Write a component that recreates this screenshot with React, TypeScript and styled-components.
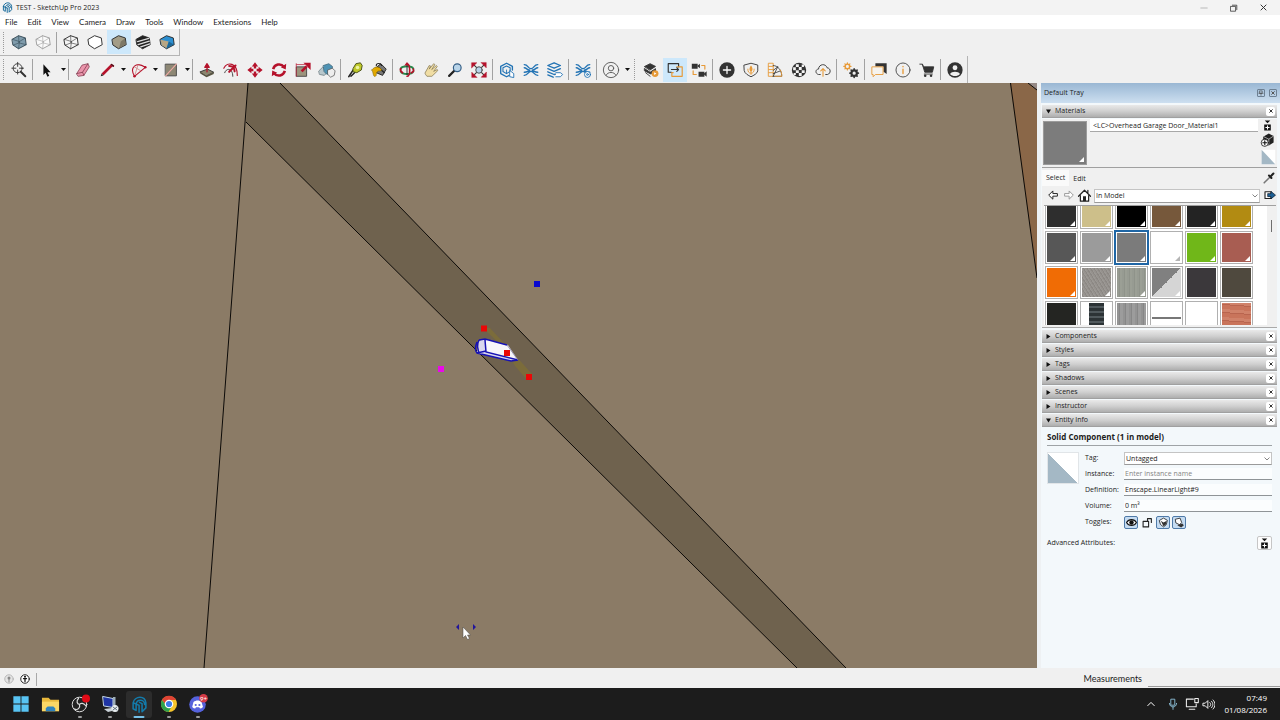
import React from 'react';
import styled, { createGlobalStyle, css } from 'styled-components';

const GlobalStyle = createGlobalStyle`
  *, *::before, *::after { box-sizing: border-box; }
  body { margin: 0; background: #f0f0f0; }
  body, button, input, select { font-family: Lato, "Open Sans", sans-serif; font-size: 8px; line-height: 12px; color: #1c1c1c; }
  button { border: 0; padding: 0; background: none; display: flex; align-items: center; justify-content: center; }
  svg { display: block; }
`;

const Window = styled.div`
  min-height: 100vh;
  display: flex;
  flex-direction: column;
`;

/* ---------- title and menu ---------- */

const TitleBar = styled.header`
  display: flex;
  align-items: center;
  gap: 3px;
  height: 15px;
  padding: 0 3px 0 2px;
  background: #f3f3f3;
`;
const Title = styled.h1`
  flex: 1;
  margin: 0;
  font-family: "Open Sans", sans-serif;
  font-size: 7px;
  font-weight: 400;
`;
const WindowButton = styled.button`
  width: 27px;
  height: 15px;
`;
const MenuBar = styled.nav`
  display: flex;
  height: 14px;
  background: #fff;
`;
const MenuItem = styled.button`
  padding: 0 5px;
`;

/* ---------- toolbars ---------- */

const Toolbar = styled.div<{ $framed?: boolean }>`
  display: flex;
  align-items: center;
  align-self: flex-start;
  height: 27px;
  border-right: 1px solid #b4b4b4;
  ${(p) => p.$framed && css`border-bottom: 1px solid #b4b4b4;`}
`;
const Grip = styled.span<{ $w: number }>`
  width: ${(p) => p.$w}px;
  height: 21px;
  padding-left: 3px;
  &::before {
    content: '';
    display: block;
    height: 100%;
    border-left: 1px dotted #9a9a9a;
  }
`;
const Separator = styled.span`
  width: 4px;
  height: 21px;
  padding-left: 1px;
  &::before {
    content: '';
    display: block;
    height: 100%;
    border-left: 1px solid #a2a2a2;
  }
`;
const ToolButton = styled.button<{ $active?: boolean }>`
  width: 24px;
  height: 24px;
  background: ${(p) => (p.$active ? '#cde8fb' : 'transparent')};
`;
const DropButton = styled.button`
  width: 8px;
  height: 24px;
`;

/* ---------- workspace ---------- */

const Workspace = styled.main`
  flex: 1;
  display: flex;
  align-items: stretch;
`;
const Viewport = styled.section`
  flex: 1;
  min-width: 0;
  display: flex;
  background: #8b7b66;
  svg { width: 100%; height: 100%; }
`;
const Tray = styled.aside`
  flex: 0 0 243px;
  display: flex;
  flex-direction: column;
  border-left: 4px solid #eef1f3;
  background: #f3f8fb;
  &, button, input, select { font-family: "Open Sans", sans-serif; font-size: 7px; }
`;
const TrayTitle = styled.header`
  display: flex;
  align-items: center;
  gap: 4px;
  height: 20px;
  padding: 0 3px;
  background: linear-gradient(#9ab7d3, #b3cbe2 50%, #cddff0);
`;
const Grow = styled.span`
  flex: 1;
`;
const SmallButton = styled.button`
  width: 8px;
  height: 8px;
  border: 1px solid #6d8093;
  border-radius: 1px;
`;
const TrayBody = styled.div`
  display: flex;
  flex-direction: column;
  gap: 1px;
  padding: 2px 3px 0 1px;
`;
const PanelHeader = styled.header`
  display: flex;
  align-items: center;
  height: 13px;
  padding: 0 2px 0 4px;
  border-bottom: 1px solid #a0a0a0;
  background: linear-gradient(#e9e9e9, #d0d0d0 50%, #aeaeae);
`;
const PanelToggle = styled.button`
  gap: 4px;
`;
const CloseButton = styled.button`
  width: 9px;
  height: 9px;
  border-radius: 2px;
  background: #fff;
`;
const MaterialsPanel = styled.div`
  padding-bottom: 2px;
  background: #f0f0f0;
  border-bottom: 1px solid #a9a9a9;
`;
const PreviewRow = styled.div`
  display: flex;
  height: 49px;
  border-bottom: 1px solid #a0a0a0;
`;
const Preview = styled.div`
  position: relative;
  width: 44px;
  height: 44px;
  margin: 2px 3px 0 1px;
  border: 1px solid #9b9b9b;
  background: #7c7c7c;
`;
const FoldCorner = styled.span<{ $outline?: boolean }>`
  position: absolute;
  right: 2px;
  bottom: 2px;
  border-left: 5px solid transparent;
  border-bottom: 5px solid ${(p) => (p.$outline ? '#b5b5b5' : '#fff')};
`;
const MaterialName = styled.input`
  flex: 1;
  min-width: 0;
  height: 13px;
  padding: 0 3px;
  border: 0;
  border-bottom: 1px solid #a8a8a8;
  background: #fff;
`;
const SideIcons = styled.div`
  display: flex;
  flex-direction: column;
  align-items: center;
  gap: 1px;
  width: 19px;
  padding-top: 1px;
`;
const TabRow = styled.div`
  display: flex;
  align-items: flex-end;
  height: 18px;
`;
const Tab = styled.button<{ $active?: boolean }>`
  height: ${(p) => (p.$active ? 16 : 14)}px;
  padding: 0 4px;
  background: ${(p) => (p.$active ? '#fafafa' : 'transparent')};
`;
const NavRow = styled.div`
  display: flex;
  align-items: center;
  gap: 2px;
  height: 19px;
  padding-left: 5px;
`;
const SelectWrap = styled.span`
  position: relative;
  flex: 1;
  display: flex;
  svg { position: absolute; right: 2px; top: 5px; pointer-events: none; }
`;
const Select = styled.select<{ $h: number }>`
  appearance: none;
  flex: 1;
  height: ${(p) => p.$h}px;
  padding: 0 1px;
  border: 1px solid #c4c4c4;
  border-bottom-color: #9a9a9a;
  border-radius: 0;
  background: #fff;
`;
const SwatchArea = styled.div`
  display: flex;
  margin: 0 1px 0 2px;
  border-top: 1px solid #a0a0a0;
  background: #fff;
`;
const SwatchGrid = styled.div`
  flex: 1;
  display: grid;
  grid-template-columns: repeat(6, 1fr);
  grid-template-rows: 23px 33px 33px 24px;
  gap: 2px;
  padding-left: 1px;
`;
const Swatch = styled.button<{ $fill: string; $selected?: boolean; $cut?: 'top' | 'bottom' }>`
  position: relative;
  border: 1px solid ${(p) => (p.$selected ? '#1f66a5' : '#b0b0b0')};
  padding: 1px;
  background: ${(p) => p.$fill} content-box, #fff;
  ${(p) => p.$selected && css`box-shadow: 0 0 0 1px #1f66a5;`}
  ${(p) => p.$cut === 'top' && css`border-top: 0; padding-top: 0;`}
  ${(p) => p.$cut === 'bottom' && css`border-bottom: 0; padding-bottom: 0;`}
`;
const ScrollGutter = styled.div`
  display: flex;
  justify-content: center;
  width: 9px;
  margin-left: 14px;
  padding-top: 14px;
  background: #f0f0f0;
`;
const ScrollThumb = styled.span`
  width: 1px;
  height: 12px;
  background: #6e6e6e;
`;
const SectionList = styled.div`
  display: flex;
  flex-direction: column;
  gap: 1px;
  padding-top: 1px;
`;

/* ---------- entity info ---------- */

const EntityPanel = styled.div`
  padding: 3px 5px 0 5px;
`;
const EntityTitle = styled.h2`
  margin: 0 0 4px;
  padding-bottom: 2px;
  border-bottom: 1px solid #9ea3a6;
  font-size: 8px;
  font-weight: 700;
  line-height: 12px;
`;
const EntityBody = styled.div`
  display: flex;
  gap: 6px;
`;
const EntityThumb = styled.div`
  width: 32px;
  height: 32px;
  margin-top: 2px;
  border: 1px solid #e1e5e8;
  background: linear-gradient(45deg, #a4b8c5 50%, #fff 50%);
`;
const Fields = styled.div`
  flex: 1;
  display: grid;
  grid-template-columns: 39px 1fr;
  grid-auto-rows: 16px;
  align-items: center;
`;
const FieldInput = styled.input`
  width: 100%;
  min-width: 0;
  height: 12px;
  padding: 0 1px;
  border: 0;
  border-bottom: 1px solid #8f9497;
  background: #fbfdfe;
  &::placeholder { color: #858585; opacity: 1; }
`;
const Toggles = styled.div`
  display: flex;
  gap: 2px;
`;
const ToggleButton = styled.button<{ $on?: boolean }>`
  width: 14px;
  height: 13px;
  border: 1px solid ${(p) => (p.$on ? '#4f7aa8' : 'transparent')};
  border-radius: 2px;
  background: ${(p) => (p.$on ? '#c5dcf2' : 'transparent')};
`;
const AdvancedRow = styled.div`
  display: flex;
  align-items: center;
  justify-content: space-between;
  height: 16px;
  margin-top: 5px;
`;
const AdvancedButton = styled.button`
  width: 15px;
  height: 14px;
  border: 1px solid #c6c6c6;
  border-radius: 2px;
  background: #fdfdfd;
`;

/* ---------- status bar and taskbar ---------- */

const StatusBar = styled.footer`
  display: flex;
  align-items: center;
  gap: 6px;
  height: 20px;
  padding: 2px 0 0 4px;
  background: #f0f0f0;
`;
const StatusRule = styled.span`
  width: 1px;
  height: 13px;
  background: #a8a8a8;
`;
const MeasureLabel = styled.label`
  padding-left: 2px;
  font-size: 9px;
`;
const MeasureInput = styled.input`
  width: 132px;
  height: 16px;
  border: 0;
  border-bottom: 1px solid #9a9a9a;
  background: transparent;
`;
const Taskbar = styled.footer`
  display: flex;
  align-items: center;
  justify-content: space-between;
  height: 32px;
  padding: 0 13px 0 8px;
  background: #1c1c1c;
`;
const Apps = styled.div`
  display: flex;
  justify-content: space-between;
  width: 203px;
`;
const AppButton = styled.button<{ $active?: boolean }>`
  position: relative;
  width: 26px;
  height: 27px;
  border-radius: 3px;
  background: ${(p) => (p.$active ? '#2c2c2c' : 'transparent')};
`;
const RunMark = styled.span<{ $active?: boolean }>`
  position: absolute;
  left: 50%;
  bottom: 0;
  width: ${(p) => (p.$active ? 11 : 4)}px;
  height: 2px;
  border-radius: 1px;
  transform: translateX(-50%);
  background: ${(p) => (p.$active ? '#76c2ea' : '#9c9c9c')};
`;
const SystemTray = styled.div`
  display: flex;
  align-items: center;
  gap: 3px;
`;
const TrayButton = styled.button`
  width: 19px;
  height: 27px;
`;
const Clock = styled.time`
  width: 49px;
  color: #fff;
  font-family: "Open Sans", sans-serif;
  text-align: right;
`;

/* ---------- drawings ---------- */

type Draw = React.ReactNode;
const Svg = ({ s = 20, children }: { s?: number; children: Draw }) => (
  <svg width={s} height={s} viewBox="0 0 20 20" fill="none" strokeLinejoin="round" strokeLinecap="round" aria-hidden="true">
    {children}
  </svg>
);

const hull = 'M2.500 7 9.500 3 17 5.500 18 13 9.500 17.500 3.500 13.500Z';
const Cube = ({ fill, line = '#222', inner = true }: { fill: string; line?: string; inner?: boolean }) => (
  <>
    <path d={hull} fill={fill} stroke={line} />
    {inner && <path d="M2.500 7 10.500 9.500 17 5.500M10.500 9.500 9.500 17.500M9.500 3 10 11 3.500 13.500M10 11 18 13" stroke={line} strokeWidth=".6" />}
  </>
);

const R = '#b5122b';
const B = '#2273b4';
const O = '#e79a38';
const K = '#333';

const styleIcons: Record<string, Draw> = {
  'X-Ray': <Cube fill="#7f9bab" line="#2f4450" />,
  'Back Edges': <Cube fill="#fafafa" line="#999" />,
  Wireframe: <Cube fill="#f5f5f5" line="#222" />,
  'Hidden Line': <Cube fill="#fff" inner={false} />,
  Shaded: <><Cube fill="#a39d88" inner={false} /><path d="M12 9.500 16.500 6 17.500 12.500 10 17Z" fill="#7d7866" /></>,
  Textures: <><Cube fill="#222" inner={false} /><path d="M4 9.500 16.500 6M4.500 13 17 9M7.500 15.500 17.500 12" stroke="#ddd" strokeWidth="1.400" /></>,
  Monochrome: <><Cube fill="#2d8fd0" inner={false} /><path d="M3 7.500 12 9.500 9.500 17 4 13.500Z" fill="#b8a684" /><path d="M12 9.500 17.500 12.800 9.500 17Z" fill="#1c6798" /></>,
};

const swirl = (
  <path
    d="M2.500 4C7 4 6.500 8.500 10 8.500S13 4 17.500 4M2.500 16C7 16 6.500 11.500 10 11.500S13 16 17.500 16M2.500 7.500C5 7.500 5.500 10 8 10S5 12.500 2.500 12.500M17.500 7.500C15 7.500 14.500 10 12 10S15 12.500 17.500 12.500"
    stroke={B}
    strokeWidth="1.500"
  />
);

const icons: Record<string, Draw> = {
  Search: <><circle cx="8.500" cy="8" r="5" stroke={K} /><path d="M8.500 1.500V6M8.500 10v4.500M2 8h4.500M10.500 8H15" stroke={K} /><path d="m12 12 5 5" stroke={K} strokeWidth="2.200" /></>,
  Select: <path d="M6 3.500V15.500L8.500 13 10.500 17.500 12.500 16.500 10.500 12.500H14Z" fill="#111" />,
  Eraser: <><path d="M3 14 9 4.500 15.500 3 17 6.500 11 16 5 17Z" fill="#ea94ab" stroke="#7c3548" strokeWidth=".8" /><path d="M3 14 9.500 12.500 11 16M9.500 12.500 15.500 3" stroke="#7c3548" strokeWidth=".8" /></>,
  Line: <><path d="M5 15 15 5" stroke={R} strokeWidth="3" strokeLinecap="butt" /><path d="m3 17 1-3 2 2Z" fill="#222" /><path d="m15 4 2 1.500" stroke="#5a0713" strokeWidth="2" /></>,
  Arc: <><path d="M5 17C-1 7 7 0 17 7L5 17" stroke={R} strokeWidth="1.200" /><path d="M5 6.500l7 4.500M5 17 9 4" stroke="#c77" strokeWidth=".8" /><circle cx="5" cy="17" r="1.400" fill={R} /><circle cx="17" cy="7" r="1.400" fill={R} /></>,
  Rectangle: <><path d="M4 3.500h12v13H4Z" fill="#8d8774" stroke="#444" /><path d="m4 16.500 12-13" stroke="#f0aaa5" strokeWidth="1.200" /></>,
  'Push/Pull': <><path d="m2.500 12 8-3 7 3.500-8 4Z" fill="#8b866f" stroke="#333" /><path d="m9.500 16.500 8-4v2l-8 3.500-7-4v-2" fill="#595541" /><path d="M10 12V7M7.500 7 10 3 12.500 7Z" fill={R} stroke={R} strokeWidth="1.400" /></>,
  Offset: <><path d="M2 8C6 0 17 2 17 16" stroke={R} strokeWidth="1.300" /><path d="M3 13C5 7 12 8 12 17" stroke="#333" /><path d="M8 12 15 5M8 5.500c4 0 6 3 6 6" stroke={R} strokeWidth="2.300" /></>,
  Move: <><path d="m10 1.500 3.500 4.500h-2.200v2.200h-2.600V6H6.500ZM10 18.500 6.500 14h2.200v-2.200h2.600V14h2.200ZM1.500 10 6 6.500v2.200h2.200v2.600H6v2.200ZM18.500 10 14 13.500v-2.200h-2.200V8.700H14V6.500Z" fill={R} /></>,
  Rotate: <><path d="M3.500 9C5 3.500 12 2 15.500 6.500M16.500 11C15 16.500 8 18 4.500 13.500" stroke={R} strokeWidth="2.800" strokeLinecap="butt" /><path d="m18 3-.5 6.500-5.500-2.500ZM2 17l.5-6.500L8 13Z" fill={R} /></>,
  Scale: <><path d="M3 6.500h11V17H3Z" fill="#9b947d" stroke="#444" /><path d="M3 4h9M2.500 3v14" stroke={R} strokeWidth=".8" /><path d="m8.500 11.500 5.500-5.500" stroke={R} strokeWidth="3" strokeLinecap="butt" /><path d="M10.500 2h8v8Z" fill={R} /></>,
  Flip: <><path d="m1 11 4-4 5 1v5l-3 3-5-1Z" fill="#b8c7cc" stroke="#64757b" strokeWidth=".8" /><path d="m6 5 6-2 4 3v6l-6 3-3-3Z" fill="#4f93b4" stroke="#365f72" strokeWidth=".8" /><path d="m11 10 5-2 3 3-1 5-4 2-3-3Z" fill="#eee" stroke="#555" strokeWidth=".8" /></>,
  'Tape Measure': <><path d="M3 17.500 8 10M5.500 17l4-4" stroke="#222" strokeWidth="1.600" /><path d="M8 8 11 3l5-1 2 3-1 5-5 3-4-1Z" fill="#bfc92b" stroke="#444b12" /><circle cx="12.800" cy="7.300" r="2" fill="#eef3a0" /></>,
  'Paint Bucket': <><path d="m6 8 6-5 6 6-4 7-7-3Z" fill="#777" stroke="#222" /><path d="m9 7 7 6M7 5c0-3 5-3 6 0" stroke="#222" strokeWidth="1.300" /><path d="M2 10c4-6 10-3 11 0-2 2-3 0-5 2s0 4-2 5C3 18 4 12 2 10Z" fill="#e2a900" stroke="#7c6100" strokeWidth=".6" /></>,
  Orbit: <><path d="M3 11.500c2 4 12 4 14 0M3 8.500C5 5 15 5 17 8.500" stroke="#268a4b" strokeWidth="2.200" /><path d="M3 8.500c-1 2 0 3 2 4.500" stroke={R} strokeWidth="2" /><path d="M17 9c1 2 0 3-2 4" stroke={R} strokeWidth="2" /><path d="M10 3.500c4 0 4 13.500 0 13.500" stroke={R} strokeWidth="1.800" /><path d="M10 5v10" stroke="#222" /><path d="m7 5 3-4 3 4Z" fill={R} /></>,
  Pan: <path d="M3.500 13 8 5l1.500.5L8 9l5-6 1.300 1-3.500 5.500L16 5l1 1-4 5.500 4-2 .5 1.200L11 17H5.500L4 15Z" fill="#f0dda4" stroke="#82754e" strokeWidth=".8" />,
  Zoom: <><path d="m3.500 16.500 6-6" stroke="#222" strokeWidth="2.500" /><circle cx="12.500" cy="7.500" r="4.300" fill="#b8d4e9" stroke="#345e85" strokeWidth="1.300" /></>,
  'Zoom Extents': <><path d="m3.500 3.500 13 13M16.500 3.500l-13 13" stroke="#333" strokeWidth="1.200" /><path d="M2 2h5.500L2 7.500ZM18 2v5.500L12.500 2ZM2 18v-5.500L7.500 18ZM18 18h-5.500l5.500-5.500Z" fill={R} stroke={R} strokeWidth=".6" /><circle cx="10" cy="10" r="3.600" fill="#b8d4e9" stroke="#444" /></>,
  '3D Warehouse': <><path d="m12.500 16-3 1.500L3 14V6l6.500-3.500L16 6v4" stroke={B} strokeWidth="1.500" /><path d="m9.500 5.500 4 2v4L9.500 14l-4-2.300v-4.200Z" stroke={B} strokeWidth="1.200" /><path d="M9.500 10v3.500" stroke={B} /><path d="M13 17v-6.500l4.500 3.500v4Z" fill="#fff" stroke={B} /></>,
  'Extension Warehouse': swirl,
  'Send to LayOut': <><path d="m2 5 7-3 7 3-7 3ZM2 8.500l7 3 7-3M2 12l7 3 2-.5M2 15.500 8 18" stroke={B} strokeWidth="1.500" /><path d="M11 13h5l2.500 2-2.500 2.500h-5" fill="#fff" stroke={B} /></>,
  'Extension Manager': <>{swirl}<circle cx="15" cy="15" r="3.300" fill="#f5f8fa" stroke={B} /><circle cx="15" cy="15" r="1" stroke={B} /></>,
  'Sign In': <><circle cx="10" cy="10" r="8.500" stroke="#555" /><circle cx="10" cy="8" r="3" stroke="#555" /><path d="M4.500 16C6 11.500 14 11.500 15.500 16" stroke="#555" /></>,
  'Start Enscape': <><path d="m3 6 6-3 6 3-6 4ZM3 8.500 9 12.500l6-4V11l-5 3.500L3 11ZM4 13l5 4" fill={K} stroke={K} /><circle cx="14.500" cy="14" r="3.800" fill={O} /><path d="m13.500 12.500 2.500 1.500-2.500 1.500Z" fill="#fff" /></>,
  'Live Updates': <><path d="M14 6.500V3H2.500v9.500H6" stroke={K} strokeWidth="1.300" /><path d="M12 6.500h6V17H6.500v-4H8" stroke={O} strokeWidth="1.300" /><path d="M6 9.500h8M12 7.500l2 2-2 2" stroke={K} strokeWidth="1.200" /></>,
  'Synchronize Views': <><path d="M2 3h6.500v5.500H2ZM9.500 12H16v5.500H9.500Z" fill={K} /><path d="m8 5.500 3-2.500v5ZM15 14.500l3.500-3v6Z" fill={K} /><path d="M13 5h3.500v4M3.500 11v4H7" stroke={O} strokeWidth="1.300" /></>,
  'Create View': <><circle cx="10" cy="10" r="8.500" fill={K} /><path d="M10 6v8M6 10h8" stroke="#fff" strokeWidth="1.400" /></>,
  'Safe Frame': <><path d="M2.500 4.500 10 2.500 17.500 4.500V11C17 14 13 16 10 17.500 7 16 3 14 2.500 11Z" stroke={K} /><path d="M10 5c2.500 3 2 6 0 7-2-1-2.500-4 0-7Z" fill={O} /><path d="M10 12v3M6.500 9c0 3 1 4.500 3.500 4.500s3.500-1.500 3.500-4.500" stroke={O} /></>,
  Materials: <><path d="M3 2.500h5v14.500H3ZM3 6h5M3 9.500h5M3 13h5" stroke={O} /><path d="M8 5c5 0 9.500 5 9.500 12H8M8 10.500l5-4M8 14l8-3M8 17 13 6.500" stroke={K} strokeWidth=".9" /><path d="M10 17h7.500c0-3-.5-5-1.500-7" stroke={O} /></>,
  'Asset Library': <><circle cx="10" cy="10" r="8" fill={K} /><path d="M6.500 3.500h3.300v3.300H6.500ZM13 4h2.500v2.800H13ZM3.500 7h3v3.200h-3ZM9.800 6.800H13V10H9.800ZM6.500 10.200h3.300v3.200H6.500ZM13 10.200h3.300v3.200H13ZM4 13.400h2.500v2.200H4ZM9.800 13.400H13v3.200H9.800Z" fill="#f4f4f4" /></>,
  Uploads: <><path d="M7 15H5C1 14 1.500 9 5 9 5.500 3 13 2.500 14.500 7.500 19 8 19 14 15 15h-2" stroke={K} /><path d="M10 17V9M7.500 11 10 8.500 12.500 11" stroke={O} strokeWidth="1.200" /></>,
  Settings: <><circle cx="6" cy="6" r="2.500" stroke={O} strokeWidth="1.600" /><path d="M6 2v1M6 9v1M2 6h1M9 6h1M3.200 3.200l.6.6M8.200 8.200l.6.600M8.800 3.200l-.6.600M3.800 8.200l-.6.600" stroke={O} strokeWidth="1.300" /><circle cx="13.500" cy="13.500" r="3" stroke={K} strokeWidth="2.400" /><path d="M13.500 8.800v1M13.500 17.200v1M8.800 13.500h1M17.200 13.500h1M10.200 10.200l.6.600M16.200 16.200l.6.600M16.800 10.200l-.6.600M10.800 16.200l-.6.600" stroke={K} strokeWidth="1.800" /></>,
  Feedback: <><path d="M6 2.500h12.500v12L15 12V6H6Z" fill={K} /><path d="M2.500 6.500h12v8.500H6l-2.500 2.500V15h-1Z" fill="#f6f3ee" stroke={O} /></>,
  About: <><circle cx="10" cy="10" r="7.800" stroke="#444" /><path d="M10 9v5M10 6v.5" stroke={O} strokeWidth="1.500" /></>,
  Store: <><path d="M2 3.500h3l1 3h11.500L16 12.500H7.500L5 4" fill={K} stroke={K} /><path d="M7 14.500h9" stroke={K} /><circle cx="8" cy="16.500" r="1.400" fill={K} /><circle cx="14.500" cy="16.500" r="1.400" fill={K} /></>,
  Account: <><circle cx="10" cy="10" r="8.500" fill={K} /><circle cx="10" cy="7.500" r="2.700" fill="#f0f0f0" /><path d="M4.500 14.500C6 11 14 11 15.500 14.500 13 17.500 7 17.500 4.500 14.500Z" fill="#f0f0f0" /></>,
};

const SketchLogo = ({ s, color }: { s: number; color: string }) => (
  <Svg s={s}>
    <path d="M2.500 8C3 4 7 1.500 10.500 1.500S17 4 17.500 8v6L13 18.500V9L10 7.500M2.500 8v7L6 17V9.500L2.500 8M6 9.500C6.500 7 8.500 5 11 5s5 2 5 5M9.500 19v-8L6 9.500M9.500 11v0" stroke={color} strokeWidth="1.800" />
  </Svg>
);

const appIcons: { name: string; active?: boolean; running?: boolean; art: Draw }[] = [
  { name: 'Start', art: <Svg s={18}><path d="M1.500 1.500h8v8h-8ZM10.500 1.500h8v8h-8ZM1.500 10.500h8v8h-8ZM10.500 10.500h8v8h-8Z" fill="#58c4f3" /></Svg> },
  { name: 'File Explorer', art: <Svg s={19}><path d="M1 3h7l2 2h9v12H1Z" fill="#e9b93c" /><path d="M1 7h18v10H1Z" fill="#fad766" /><path d="M5 17v-3l2-2h6l2 2v3Z" fill="#2f83bd" /></Svg> },
  { name: 'OBS Studio', running: true, art: <Svg><circle cx="9.500" cy="10.500" r="7.300" fill="#222" stroke="#ddd" /><path d="M8.500 4.500C6 7 7 10 9.500 10.500M16 12c-2-3-5.500-3.500-6.500-1.500M4.500 15c3 1.500 6-1 5-4.500" stroke="#ddd" strokeWidth="1.200" /><circle cx="16" cy="4.500" r="4" fill="#e20b17" /></Svg> },
  { name: 'Remote Desktop', running: true, art: <Svg><path d="M3 2.500 13 4.500v9L4 12Z" fill="#1f35a5" stroke="#c4d7e8" /><path d="m4 15 8-1 4 2-8 2Z" fill="#cbd3d8" /><path d="M13 3h2.500v10H13Z" fill="#9cadb8" /><circle cx="15" cy="14.500" r="3.500" fill="#e9eef0" /><path d="m13 13 2 1.500-2 1.500M17 13l-2 1.500 2 1.500" stroke="#456" strokeWidth=".8" /></Svg> },
  { name: 'SketchUp', running: true, active: true, art: <SketchLogo s={17} color="#137bab" /> },
  { name: 'Chrome', running: true, art: <Svg><circle cx="10" cy="10" r="8" fill="#f7c52c" /><path d="M3 6a8 8 0 0 1 14 0H10L7 11Z" fill="#df4334" /><path d="M3 6a8 8 0 0 0 6.500 12l3.500-6-6-1Z" fill="#2fa24c" /><circle cx="10" cy="10" r="3.700" fill="#3e7de8" stroke="#fff" strokeWidth="1.200" /></Svg> },
  { name: 'Discord', running: true, art: <Svg><circle cx="9.500" cy="10.500" r="8.300" fill="#5562dc" /><path d="M5.500 8C8 6 11.500 6 13.500 8L15 13c-1 1-2 1.500-3 1.500l-.8-1.200H8l-.8 1.200c-1 0-2-.5-3-1.500Z" fill="#fff" /><circle cx="7.700" cy="11" r="1.100" fill="#5562dc" /><circle cx="11.400" cy="11" r="1.100" fill="#5562dc" /><circle cx="15.500" cy="4.300" r="4.300" fill="#d43a46" /><text x="15.500" y="6.500" fontSize="6" textAnchor="middle" fill="#fff">9+</text></Svg> },
];

const Caret = () => <svg width="5" height="3" viewBox="0 0 5 3" aria-hidden="true"><path d="M0 0h5L2.500 3Z" fill="#111" /></svg>;
const Chevron = () => <svg width="6" height="4" viewBox="0 0 6 4" fill="none" aria-hidden="true"><path d="m.5.500 2.500 2.500L5.500.500" stroke="#666" strokeWidth=".8" /></svg>;
const Disclosure = ({ open }: { open?: boolean }) => (
  <svg width="5" height="5" viewBox="0 0 5 5" aria-hidden="true"><path d={open ? 'M0 .500h5L2.500 4.500Z' : 'M.500 0v5L4.500 2.500Z'} fill="#111" /></svg>
);
const Cross = ({ s = 5, color = '#333' }) => (
  <svg width={s} height={s} viewBox="0 0 10 10" aria-hidden="true"><path d="m1 1 8 8M9 1 1 9" stroke={color} strokeWidth={10 / s} /></svg>
);
const ExpandIcon = () => <Svg s={11}><path d="M5 1h10l-5 5ZM4 8h12v11H4Z" fill="#111" /><path d="M10 10.500v6M7 13.500h6" stroke="#fff" strokeWidth="2" /></Svg>;

/* ---------- data ---------- */

const menus = ['File', 'Edit', 'View', 'Camera', 'Draw', 'Tools', 'Window', 'Extensions', 'Help'];
const styleTools = ['X-Ray', 'Back Edges', '|', 'Wireframe', 'Hidden Line', 'Shaded', 'Textures', 'Monochrome'];
const tools = [
  'Search', '|', 'Select', 'v', '|', 'Eraser', 'Line', 'v', 'Arc', 'v', 'Rectangle', 'v', '|',
  'Push/Pull', 'Offset', 'Move', 'Rotate', 'Scale', 'Flip', '|', 'Tape Measure', 'Paint Bucket', '|',
  'Orbit', 'Pan', 'Zoom', 'Zoom Extents', '|', '3D Warehouse', 'Extension Warehouse', 'Send to LayOut', '|',
  'Extension Manager', '|', 'Sign In', 'v', ':', 'Start Enscape', 'Live Updates', 'Synchronize Views', '|',
  'Create View', 'Safe Frame', 'Materials', 'Asset Library', 'Uploads', '|', 'Settings', '|',
  'Feedback', 'About', 'Store', '|', 'Account',
];

const flat = (c: string) => `linear-gradient(${c}, ${c})`;
const speckle = 'repeating-linear-gradient(58deg, #96928e 0 1px, #8c8884 1px 2px, #9b9894 2px 3px)';
const weave = 'repeating-linear-gradient(90deg, #979b92 0 2px, #8f938a 2px 3px, #9b9f95 3px 5px)';
const swatches = [
  '#2e2e2e', '#cdbf8a', '#000000', '#76583b', '#232323', '#b28b12',
  '#575757', '#9b9b9b', '#7b7b7b', '#ffffff', '#70b719', '#a85d52',
  '#f06c05', speckle, weave, 'linear-gradient(135deg, #808080 50%, #d5d5d5 50%)', '#3b383b', '#4f493e',
  '#242522',
  'linear-gradient(90deg, #fff 25%, transparent 25% 75%, #fff 75%), repeating-linear-gradient(#2c3336 0 3px, #50595d 3px 5px)',
  'repeating-linear-gradient(90deg, #939393 0 2px, #878787 2px 3px, #9c9c9c 3px 6px)',
  'linear-gradient(#fff 14px, #777 14px 16px, #fff 16px)', '#ffffff',
  'repeating-linear-gradient(4deg, #c9745b 0 4px, #b9654f 4px 5px, #d0826a 5px 8px)',
];
const collapsed = ['Components', 'Styles', 'Tags', 'Shadows', 'Scenes', 'Instructor'];

const ToolRow = ({ items, set, active }: { items: string[]; set: Record<string, Draw>; active: string }) => (
  <>
    {items.map((t, i) => {
      if (t === '|') return <Separator key={i} />;
      if (t === ':') return <Grip key={i} $w={8} />;
      if (t === 'v') return <DropButton key={i} aria-label={`${items[i - 1]} options`}><Caret /></DropButton>;
      return (
        <ToolButton key={i} $active={t === active} aria-label={t}>
          <Svg s={18}>{set[t]}</Svg>
        </ToolButton>
      );
    })}
  </>
);

const Section = ({ name, open }: { name: string; open?: boolean }) => (
  <PanelHeader>
    <PanelToggle aria-expanded={!!open}><Disclosure open={open} />{name}</PanelToggle>
    <Grow />
    <CloseButton aria-label={`Close ${name}`}><Cross s={4} /></CloseButton>
  </PanelHeader>
);

const Scene = () => (
  <svg viewBox="0 83 1037 585" preserveAspectRatio="xMidYMid slice" fill="none" role="img" aria-label="Model view">
    <path d="M248 83H280L846 668H797L246 122Z" fill="#6f624e" />
    <path d="M248 83 204 668M246 122 797 668M280 83 846 668" stroke="#0c0a08" />
    <path d="M1010 83H1037V278Z" fill="#8a6748" />
    <path d="M1028 83H1037V90Z" fill="#968a86" />
    <path d="M1010.500 83 1037 278M1028 83 1037 90" stroke="#0c0a08" />
    <path d="M482 327 490 328 513 353 532 374 527 380 515 366 506 350Z" fill="#7b6c3b" />
    <path d="M478 341 485 339 508 345 518 360 511 361 477 353Z" fill="#d9d7ee" />
    <path d="M485 339 508 346 517 360 486 352Z" fill="#f7f6fb" />
    <path d="M479 340 485 339 507 345M477 342C475 347 475 351 477 353L511 361 518 360 486 352 485 340M479 340C477 344 477 350 480 354M477 353 486 351" stroke="#1712b4" strokeWidth="1.500" />
    <path d="M507 345 518 360" stroke="#8a86a0" strokeWidth=".8" />
    <path d="M481 325.500h6v6h-6ZM504 350h6v6h-6ZM526 374h6v6h-6Z" fill="#ea0707" />
    <path d="M534 281h6v6h-6Z" fill="#0808d0" />
    <path d="M438 366h6v6h-6Z" fill="#ea08ea" />
    <path d="M459 624v6l-3-3ZM473 624v6l3-3Z" fill="#21159b" />
    <path d="M463 627V638L465.500 635.500 467.500 639.500 469.500 638.500 467.500 635H470.500Z" fill="#fff" stroke="#444" strokeWidth=".5" />
  </svg>
);

export default function App() {
  return (
    <Window>
      <GlobalStyle />
      <TitleBar>
        <SketchLogo s={11} color="#1a6c9c" />
        <Title>TEST - SketchUp Pro 2023</Title>
        <WindowButton aria-label="Minimize"><Svg s={8}><path d="M2 10h16" stroke="#aaa" strokeWidth="2" /></Svg></WindowButton>
        <WindowButton aria-label="Restore"><Svg s={8}><path d="M2 6h12v12H2ZM6 3h11v11" stroke="#333" strokeWidth="2" /></Svg></WindowButton>
        <WindowButton aria-label="Close"><Cross s={7} /></WindowButton>
      </TitleBar>
      <MenuBar>
        {menus.map((m) => <MenuItem key={m}>{m}</MenuItem>)}
      </MenuBar>
      <Toolbar $framed>
        <Grip $w={7} />
        <ToolRow items={styleTools} set={styleIcons} active="Shaded" />
      </Toolbar>
      <Toolbar>
        <Grip $w={7} />
        <ToolRow items={tools} set={icons} active="Live Updates" />
      </Toolbar>

      <Workspace>
        <Viewport><Scene /></Viewport>
        <Tray>
          <TrayTitle>
            <span>Default Tray</span>
            <Grow />
            <SmallButton aria-label="Pin tray"><Svg s={6}><path d="M6 3h8v8H6ZM3 11h14M10 11v7" stroke="#444" strokeWidth="2" /></Svg></SmallButton>
            <SmallButton aria-label="Close tray"><Cross s={4} color="#555" /></SmallButton>
          </TrayTitle>
          <TrayBody>
            <Section name="Materials" open />
            <MaterialsPanel>
              <PreviewRow>
                <Preview><FoldCorner /></Preview>
                <MaterialName aria-label="Material name" defaultValue="<LC>Overhead Garage Door_Material1" />
                <SideIcons>
                  <button aria-label="Show secondary pane"><ExpandIcon /></button>
                  <button aria-label="Create material"><Svg s={16}><path d="m4 6 7-4 6 3v8l-6 4-7-3Z" fill="#222" /><path d="m5 6 6 3 6-4M11 9v7" stroke="#bbb" /><circle cx="6" cy="13.500" r="4.500" fill="#fff" stroke="#111" /><path d="M6 11v5M3.500 13.500h5" stroke="#111" strokeWidth="1.400" /></Svg></button>
                  <button aria-label="Default material"><Svg s={16}><path d="M2 1h17v18H2Z" fill="#fff" /><path d="M2 1v18h17Z" fill="#a4b8c5" /></Svg></button>
                </SideIcons>
              </PreviewRow>
              <TabRow role="tablist">
                <Tab role="tab" aria-selected="true" $active>Select</Tab>
                <Tab role="tab" aria-selected="false">Edit</Tab>
                <Grow />
                <button aria-label="Sample paint"><Svg s={16}><path d="m4 16 7-7" stroke="#777" strokeWidth="2" /><path d="m10 7 3 3M12 8l3.500-3.500" stroke="#222" strokeWidth="2.600" /></Svg></button>
              </TabRow>
              <NavRow>
                <button aria-label="Back"><Svg s={13}><path d="m3 9 6-6v4h7v4H9v4Z" fill="#fff" stroke="#222" strokeWidth="1.500" /></Svg></button>
                <button aria-label="Forward"><Svg s={13}><path d="m17 9-6-6v4H4v4h7v4Z" fill="#fff" stroke="#999" strokeWidth="1.500" /></Svg></button>
                <button aria-label="In model"><Svg s={15}><path d="M2 11 10 3l8 8M4.500 10v7.500h11V10M14.500 3v3" fill="#fff" stroke="#222" strokeWidth="1.600" /><path d="M8 11h4v6.500H8Z" fill="#222" /></Svg></button>
                <SelectWrap>
                  <Select $h={14} aria-label="Material collection" defaultValue="In Model"><option>In Model</option></Select>
                  <Chevron />
                </SelectWrap>
                <button aria-label="Details"><Svg s={15}><path d="M4 5h8v9H4Z" fill="#fff" stroke="#222" strokeWidth="1.500" /><path d="M8 7.500h4V4.500l6 5-6 5v-3H8Z" fill="#1c5f94" stroke="#123" /></Svg></button>
              </NavRow>
              <SwatchArea>
                <SwatchGrid>
                  {swatches.map((c, i) => (
                    <Swatch
                      key={i}
                      $fill={c.startsWith('#') ? flat(c) : c}
                      $selected={i === 8}
                      $cut={i < 6 ? 'top' : i > 17 ? 'bottom' : undefined}
                      aria-label={`Material ${i + 1}`}
                    >
                      {i < 16 && <FoldCorner $outline={i === 9} />}
                    </Swatch>
                  ))}
                </SwatchGrid>
                <ScrollGutter><ScrollThumb /></ScrollGutter>
              </SwatchArea>
            </MaterialsPanel>
            <SectionList>
              {collapsed.map((n) => <Section key={n} name={n} />)}
              <Section name="Entity Info" open />
            </SectionList>
            <EntityPanel>
              <EntityTitle>Solid Component (1 in model)</EntityTitle>
              <EntityBody>
                <EntityThumb />
                <Fields>
                  <label htmlFor="tag">Tag:</label>
                  <SelectWrap>
                    <Select $h={13} id="tag" defaultValue="Untagged"><option>Untagged</option></Select>
                    <Chevron />
                  </SelectWrap>
                  <label htmlFor="instance">Instance:</label>
                  <FieldInput id="instance" placeholder="Enter instance name" />
                  <label htmlFor="definition">Definition:</label>
                  <FieldInput id="definition" defaultValue="Enscape.LinearLight#9" />
                  <label htmlFor="volume">Volume:</label>
                  <FieldInput id="volume" readOnly value="0 m³" />
                  <span>Toggles:</span>
                  <Toggles>
                    <ToggleButton $on aria-label="Visible"><Svg s={11}><path d="M1 10C5 3 15 3 19 10 15 17 5 17 1 10Z" fill="#fff" stroke="#111" strokeWidth="2" /><circle cx="10" cy="10" r="4" fill="#111" /></Svg></ToggleButton>
                    <ToggleButton aria-label="Locked"><Svg s={11}><path d="M2 8h10v10H2ZM10 8V3h7v7" stroke="#222" strokeWidth="2" /></Svg></ToggleButton>
                    <ToggleButton $on aria-label="Receive shadows"><Svg s={11}><path d="m3 6 7-4 7 4-2 8-5 4-5-4Z" fill="#fff" stroke="#222" strokeWidth="1.500" /><path d="m5 7 5 3 6-3-2 7-4 3Z" fill="#333" /></Svg></ToggleButton>
                    <ToggleButton $on aria-label="Cast shadows"><Svg s={11}><path d="m3 4 8-2 3 8-4 4-6-3Z" fill="#fff" stroke="#222" strokeWidth="1.500" /><path d="m6 15 9-3 3 3-5 4Z" fill="#333" /></Svg></ToggleButton>
                  </Toggles>
                </Fields>
              </EntityBody>
              <AdvancedRow>
                <span>Advanced Attributes:</span>
                <AdvancedButton aria-label="Show advanced attributes"><ExpandIcon /></AdvancedButton>
              </AdvancedRow>
            </EntityPanel>
          </TrayBody>
        </Tray>
      </Workspace>

      <StatusBar>
        <button aria-label="Geo-location"><Svg s={10}><circle cx="10" cy="10" r="8.500" fill="#e4e4e4" stroke="#aaa" strokeWidth="1.500" /><circle cx="10" cy="8" r="3" fill="#888" /><path d="M10 10v6" stroke="#888" strokeWidth="2" /></Svg></button>
        <button aria-label="Credits"><Svg s={10}><circle cx="10" cy="10" r="8.500" fill="#fff" stroke="#111" strokeWidth="1.800" /><path d="M10 9v6M7 9h6" stroke="#111" strokeWidth="2.500" /><circle cx="10" cy="5.500" r="2" fill="#111" /></Svg></button>
        <StatusRule />
        <Grow />
        <MeasureLabel htmlFor="measure">Measurements</MeasureLabel>
        <MeasureInput id="measure" />
      </StatusBar>
      <Taskbar>
        <Apps>
          {appIcons.map((a) => (
            <AppButton key={a.name} $active={a.active} aria-label={a.name}>
              {a.art}
              {a.running && <RunMark $active={a.active} />}
            </AppButton>
          ))}
        </Apps>
        <SystemTray>
          <TrayButton aria-label="Hidden icons"><Svg s={8}><path d="m2 14 8-8 8 8" stroke="#fff" strokeWidth="2.500" /></Svg></TrayButton>
          <TrayButton aria-label="Microphone"><Svg s={12}><path d="M7 2h6v10H7Z" fill="#1c1c1c" stroke="#8ec3dd" strokeWidth="1.500" /><path d="M4 9c0 8 12 8 12 0M10 15v4" stroke="#8ec3dd" strokeWidth="1.500" /></Svg></TrayButton>
          <Svg s={14}><path d="M12 3H2v11h14v-4M6 17.500h8" stroke="#eee" strokeWidth="1.500" /><path d="M14 2h5v6h-5Z" stroke="#eee" strokeWidth="1.500" /></Svg>
          <Svg s={13}><path d="M2 8h3l4-4v12l-4-4H2ZM12 7c2 2 2 4 0 6M14.500 5c3 3 3 7 0 10M17 3c4 4 4 10 0 14" stroke="#fff" strokeWidth="1.400" /></Svg>
          <Clock>07:49<br />01/08/2026</Clock>
        </SystemTray>
      </Taskbar>
    </Window>
  );
}
